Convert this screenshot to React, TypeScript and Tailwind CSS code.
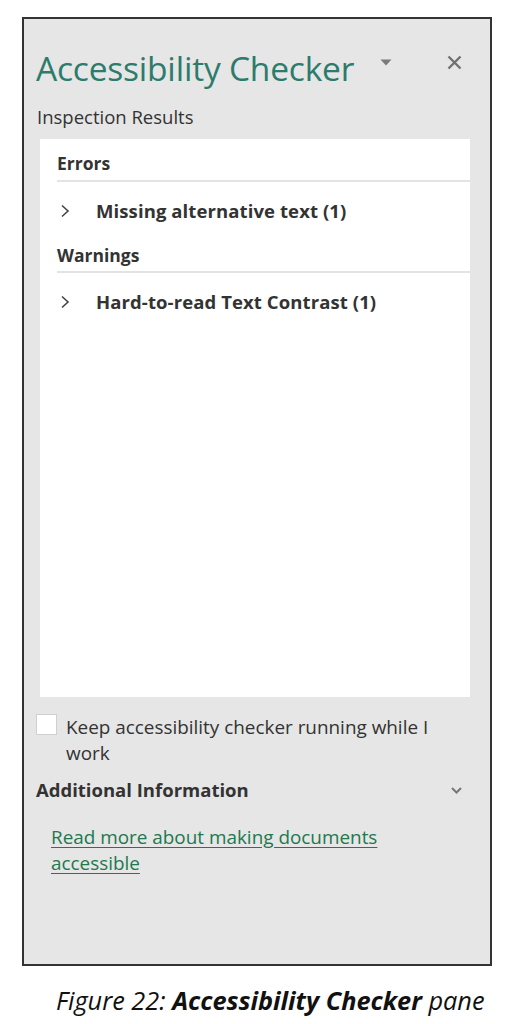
import React from "react";

export default function App() {
  const font = { fontFamily: '"Open Sans", "Noto Sans", sans-serif' } as React.CSSProperties;
  return (
    <div className="w-[515px] h-[1024px] bg-white relative overflow-hidden" style={font}>
      <div className="pt-[17px] pl-[22px]">
        <div className="w-[470px] h-[949px] border-2 border-[#333333] bg-[#e6e6e6] flex flex-col">
          {/* Header */}
          <div className="flex items-center pt-[29px] pl-[12px]">
            <div className="text-[33.5px] leading-[40px] text-[#2c7b6c] font-normal tracking-[-0.2px] whitespace-nowrap">Accessibility Checker</div>
            <svg width="12" height="7" viewBox="0 0 12 7" className="ml-[26px] mt-[-12px] shrink-0">
              <path d="M0.5 0.5 L11.5 0.5 L6 6.5 Z" fill="#7a7a7a" />
            </svg>
            <svg width="15" height="15" viewBox="0 0 15 15" className="ml-[55px] mt-[-12px] shrink-0">
              <path d="M1.5 1.5 L13.5 13.5 M13.5 1.5 L1.5 13.5" stroke="#707070" strokeWidth="2.4" />
            </svg>
          </div>
          <div className="pl-[13px] mt-[17px] text-[18.5px] leading-[24px] text-[#333]">Inspection Results</div>
          {/* White panel */}
          <div className="ml-[16px] mt-[10px] w-[430px] h-[558px] bg-white pl-[17px] shrink-0">
            <div className="pt-[12px] text-[17.5px] font-bold text-[#333] leading-[24px]">Errors</div>
            <div className="mt-[5px] h-[2px] bg-[#e3e3e3]" />
            <div className="flex items-center h-[58px]">
              <svg width="10" height="14" viewBox="0 0 10 14" className="ml-[3px] shrink-0">
                <path d="M2 1.5 L8 7 L2 12.5" fill="none" stroke="#444" strokeWidth="1.6" />
              </svg>
              <span className="ml-[26px] text-[18.5px] font-bold text-[#333] tracking-[0.1px]">Missing alternative text (1)</span>
            </div>
            <div className="mt-[3px] text-[17.5px] font-bold text-[#333] leading-[24px]">Warnings</div>
            <div className="mt-[4px] h-[2px] bg-[#e3e3e3]" />
            <div className="flex items-center h-[58px]">
              <svg width="10" height="14" viewBox="0 0 10 14" className="ml-[3px] shrink-0">
                <path d="M2 1.5 L8 7 L2 12.5" fill="none" stroke="#444" strokeWidth="1.6" />
              </svg>
              <span className="ml-[26px] text-[18.5px] font-bold text-[#333] tracking-[0.1px]">Hard-to-read Text Contrast (1)</span>
            </div>
          </div>
          {/* Checkbox */}
          <div className="flex mt-[17px] pl-[12px]">
            <div className="w-[21px] h-[21px] bg-white border border-[#d0d0d0] shrink-0" />
            <div className="ml-[9px] text-[18.9px] leading-[26px] text-[#333] w-[420px] whitespace-nowrap">
              Keep accessibility checker running while I<br />work
            </div>
          </div>
          <div className="flex items-center mt-[12px] pl-[12px] pr-[28px]">
            <div className="text-[18.5px] font-bold text-[#333] leading-[24px] flex-1">Additional Information</div>
            <svg width="11" height="7" viewBox="0 0 11 7" className="shrink-0">
              <path d="M1 1 L5.5 5.5 L10 1" fill="none" stroke="#777" strokeWidth="2" />
            </svg>
          </div>
          <div className="mt-[22px] pl-[27px] text-[18.9px] leading-[26px] text-[#22784f] underline underline-offset-[3px] whitespace-nowrap">
            Read more about making documents<br />accessible
          </div>
        </div>
      </div>
      <div className="mt-[18px] pl-[56px] text-[25.3px] leading-[32px] italic text-[#111] whitespace-nowrap">
        Figure 22: <span className="font-bold">Accessibility Checker</span> pane
      </div>
    </div>
  );
}
